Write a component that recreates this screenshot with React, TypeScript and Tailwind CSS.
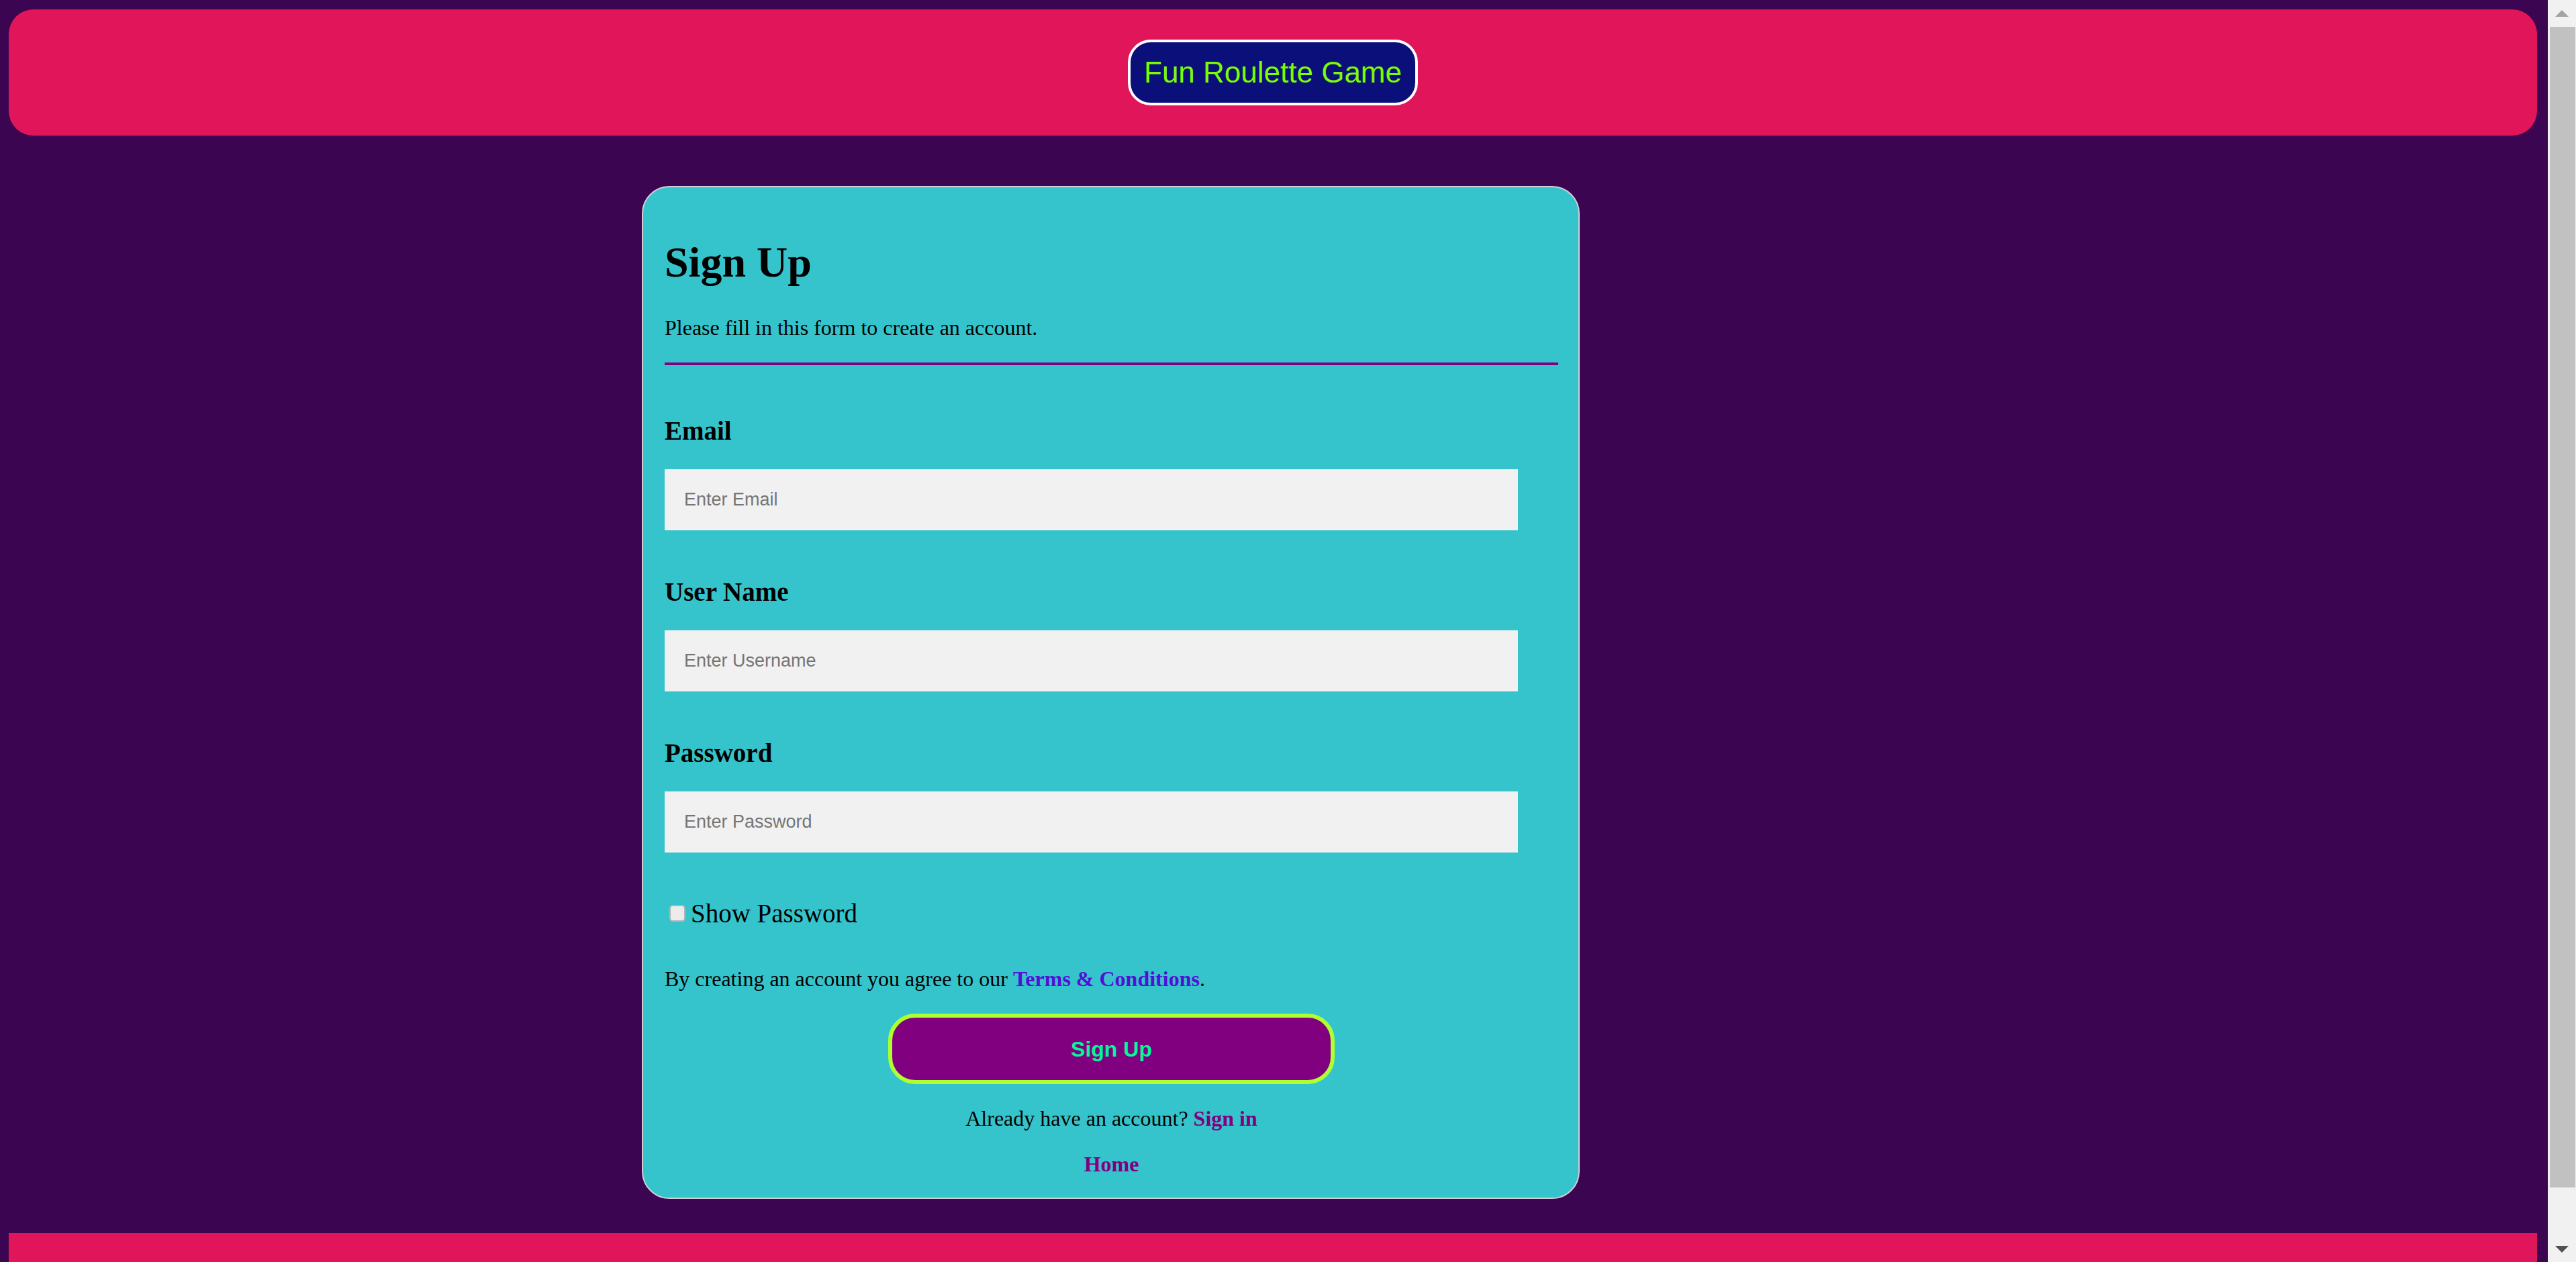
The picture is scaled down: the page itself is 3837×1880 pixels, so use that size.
import { useState } from "react";

const serif = "font-['Liberation_Serif','Times_New_Roman',serif]";
const sans = "font-['Liberation_Sans',Arial,sans-serif]";

function Field({ label, placeholder, type = "text" }: { label: string; placeholder: string; type?: string }) {
  return (
    <>
      <label className="mt-[72px] block text-[39px] leading-[39px] font-bold text-black first:mt-[78px]">
        {label}
      </label>
      <input
        type={type}
        placeholder={placeholder}
        className={`${sans} mt-[38px] block h-[91px] w-[1271px] bg-[#f1f1f1] px-[29px] text-[27px] text-black outline-none placeholder:text-[#757575]`}
      />
    </>
  );
}

// page scrollbar as it shows in the screenshot
function Scrollbar() {
  return (
    <aside className="flex w-[42px] shrink-0 flex-col items-center bg-[#f1f1f1]">
      <div className="mt-[15px] h-0 w-0 border-x-[10px] border-b-[10px] border-x-transparent border-b-[#a3a3a3]" />
      <div className="mt-[15px] ml-[2px] h-[1729px] w-[38px] bg-[#c1c1c1]" />
      <div className="mt-[87px] h-0 w-0 border-x-[10px] border-t-[10px] border-x-transparent border-t-[#505050]" />
    </aside>
  );
}

export default function App() {
  const [show, setShow] = useState(false);

  return (
    <div className="flex h-screen overflow-hidden bg-[#3b0551]">
      <div className="flex min-w-0 flex-1 flex-col pt-[14px] pr-[16px] pb-[14px] pl-[13px]">
        <header className="flex h-[188px] shrink-0 items-center justify-center rounded-[37px] bg-[#e1165a]">
          <h1
            className={`${sans} rounded-[34px] border-4 border-white bg-[#0b0f7a] px-[20px] py-[20px] text-[44px] leading-[50px] font-normal text-[#7cfc00]`}
          >
            Fun Roulette Game
          </h1>
        </header>

        <main className={`${serif} mt-[75px] ml-[943px] w-[1397px] shrink-0 rounded-[41px] border-2 border-[#d2cdd6] bg-[#35c4cc] pt-[80px] pr-[30px] pb-[34px] pl-[32px] text-black`}>
          <h2 className="text-[64px] leading-[64px] font-bold">Sign Up</h2>
          <p className="mt-[49px] text-[32px] leading-[32px]">Please fill in this form to create an account.</p>
          <div className="mt-[36px] h-[4px] bg-[#800080]" />

          <div className="flex flex-col">
            <Field label="Email" placeholder="Enter Email" type="email" />
            <Field label="User Name" placeholder="Enter Username" />
            <Field label="Password" placeholder="Enter Password" type={show ? "text" : "password"} />
          </div>

          <label className="mt-[71px] flex h-[39px] items-center text-[39px] leading-[39px]">
            <input
              type="checkbox"
              checked={show}
              onChange={() => setShow(!show)}
              className="mr-[8px] ml-[7px] h-[25px] w-[24px] appearance-none rounded-[5px] border-2 border-[#b4b4b4] bg-[#ececec]"
            />
            Show Password
          </label>

          <p className="mt-[62px] text-[32px] leading-[32px]">
            By creating an account you agree to our{" "}
            <a href="#" className="font-bold text-[#5210d6]">
              Terms &amp; Conditions
            </a>
            .
          </p>

          <button
            type="button"
            className={`${sans} mx-auto mt-[36px] block h-[105px] w-[665px] rounded-[40px] border-[6px] border-[#adff2f] bg-[#800080] text-[32px] font-bold text-[#00fa9a]`}
          >
            Sign Up
          </button>

          <p className="mt-[35px] text-center text-[32px] leading-[32px]">
            Already have an account?{" "}
            <a href="#" className="font-bold text-[#800080]">
              Sign in
            </a>
          </p>
          <p className="mt-[36px] text-center text-[32px] leading-[32px]">
            <a href="#" className="font-bold text-[#800080]">
              Home
            </a>
          </p>
        </main>

        <footer className="mt-[51px] h-[100px] shrink-0 rounded-b-[37px] bg-[#e1165a]" />
      </div>
      <Scrollbar />
    </div>
  );
}
